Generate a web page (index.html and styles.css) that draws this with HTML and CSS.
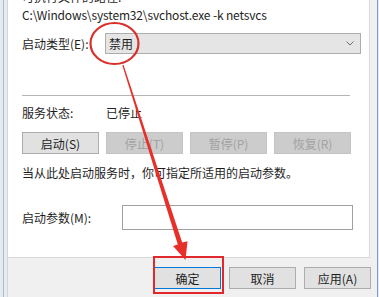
FILE: index.html
```html
<!DOCTYPE html>
<html lang="zh-CN">
<head>
  <meta charset="UTF-8">
  <meta name="viewport" content="width=device-width, initial-scale=1.0">
  <title>服务属性</title>
  <link rel="stylesheet" href="styles.css">
</head>
<body>

  <div class="screen">
    <div class="edge-left"></div>

    <div class="dialog">
      <!-- General tab panel -->
      <div class="panel">
        <div class="cut-line"><span>可执行文件的路径:</span></div>
        <div class="path">C:\Windows\system32\svchost.exe -k netsvcs</div>

        <div class="row row-type">
          <label class="label label-type">启动类型(E):</label>
          <div class="select">
            <span>禁用</span>
            <svg class="chevron" width="8" height="5" viewBox="0 0 8 5">
              <path d="M0.5 0.5 L4 4 L7.5 0.5" fill="none" stroke="#6d6d6d" stroke-width="1"/>
            </svg>
          </div>
        </div>

        <div class="divider"></div>

        <div class="row row-status">
          <span class="label label-status">服务状态:</span>
          <span>已停止</span>
        </div>

        <div class="actions">
          <button class="btn">启动(S)</button>
          <button class="btn" disabled>停止(T)</button>
          <button class="btn" disabled>暂停(P)</button>
          <button class="btn" disabled>恢复(R)</button>
        </div>

        <div class="hint">当从此处启动服务时，你可指定所适用的启动参数。</div>

        <div class="row row-param">
          <label class="label label-param">启动参数(M):</label>
          <input class="param-input" type="text">
        </div>
      </div>

      <!-- Dialog buttons -->
      <div class="footer">
        <button class="btn btn-foot btn-default">确定</button>
        <button class="btn btn-foot">取消</button>
        <button class="btn btn-foot">应用(A)</button>
      </div>
    </div>

    <div class="edge-right"></div>
  </div>

  <!-- Red annotation: circle, arrow and box -->
  <svg class="annot" width="379" height="297" viewBox="0 0 379 297">
    <ellipse cx="114.5" cy="43.5" rx="24" ry="20.5" fill="none" stroke="#d9302b" stroke-width="2.2"/>
    <polygon fill="#e8302a" points="123.5,64.8 182.2,242.6 187.5,241.2 185.5,260 173,246 177.8,244.6 122.3,65.2"/>
    <rect x="154" y="257" width="69" height="36" fill="none" stroke="#e0282d" stroke-width="2"/>
  </svg>

</body>
</html>
```

FILE: styles.css
```css
/* General Styles */
body {
  margin: 0;
  width: 379px;
  height: 297px;
  overflow: hidden;
  position: relative;
  background-color: #f0f0f0;
  font-family: "Noto Sans CJK SC", "Noto Sans", sans-serif;
  font-size: 12px;
  color: #1e1e1e;
}

.screen {
  display: flex;
  height: 297px;
}

/* Window frame edges */
.edge-left {
  width: 8px;
  background: linear-gradient(to right, #e4eaf0 0 3px, #a9bdd2 3px 4px, #e7ecf1 4px 7px, #cfd6de 7px 8px);
}

.edge-right {
  width: 2px;
  background: linear-gradient(to right, #7b9cc6 0 1px, #e6ecf3 1px);
}

.dialog {
  width: 369px;
  display: flex;
  flex-direction: column;
  background-color: #f0f0f0;
}

/* Tab panel */
.panel {
  height: 257px;
  margin-right: 7px;
  padding-left: 14px;
  background-color: #fff;
  border-right: 1px solid #d9d9d9;
  border-bottom: 1px solid #d9d9d9;
  overflow: hidden;
}

/* only the lower edge of this line is in view */
.cut-line {
  height: 6px;
  overflow: hidden;
}

.cut-line span {
  display: block;
  margin-top: -11px;
  line-height: 16px;
}

.path {
  margin-top: 1px;
  line-height: 16px;
  letter-spacing: -0.15px;
}

.row {
  display: flex;
  align-items: center;
}

.row-type {
  margin-top: 10px;
  height: 21px;
}

.label-type {
  width: 83px;
}

.select {
  width: 245px;
  height: 19px;
  padding: 0 6px 0 3px;
  display: flex;
  align-items: center;
  justify-content: space-between;
  background-color: #e5e5e5;
  border: 1px solid #adadad;
}

.divider {
  margin-top: 41px;
  margin-right: 19px;
  height: 1px;
  background-color: #b4b4b4;
}

.row-status {
  margin-top: 9px;
  line-height: 16px;
}

.label-status {
  width: 84px;
}

/* Buttons */
.actions {
  display: flex;
  gap: 7px;
  margin-top: 11px;
}

.btn {
  width: 77px;
  height: 22px;
  padding: 0;
  font-family: inherit;
  font-size: 12px;
  color: #1e1e1e;
  background-color: #e1e1e1;
  border: 1px solid #adadad;
}

.btn:disabled {
  background-color: #cccccc;
  border-color: #c4c4c4;
  color: #a2a2a2;
}

.hint {
  margin-top: 11px;
  line-height: 16px;
}

.row-param {
  margin-top: 24px;
}

.label-param {
  width: 100px;
}

.param-input {
  box-sizing: border-box;
  width: 231px;
  height: 25px;
  margin: 0;
  border: 1px solid #a0a0a0;
  background-color: #fff;
}

/* Dialog footer */
.footer {
  display: flex;
  justify-content: flex-end;
  gap: 8px;
  padding: 9px 6px 0 0;
}

.btn-foot {
  width: 67px;
}

.btn-default {
  border-color: #0078d7;
}

/* Annotation overlay */
.annot {
  position: absolute;
  top: 0;
  left: 0;
  pointer-events: none;
}
```
